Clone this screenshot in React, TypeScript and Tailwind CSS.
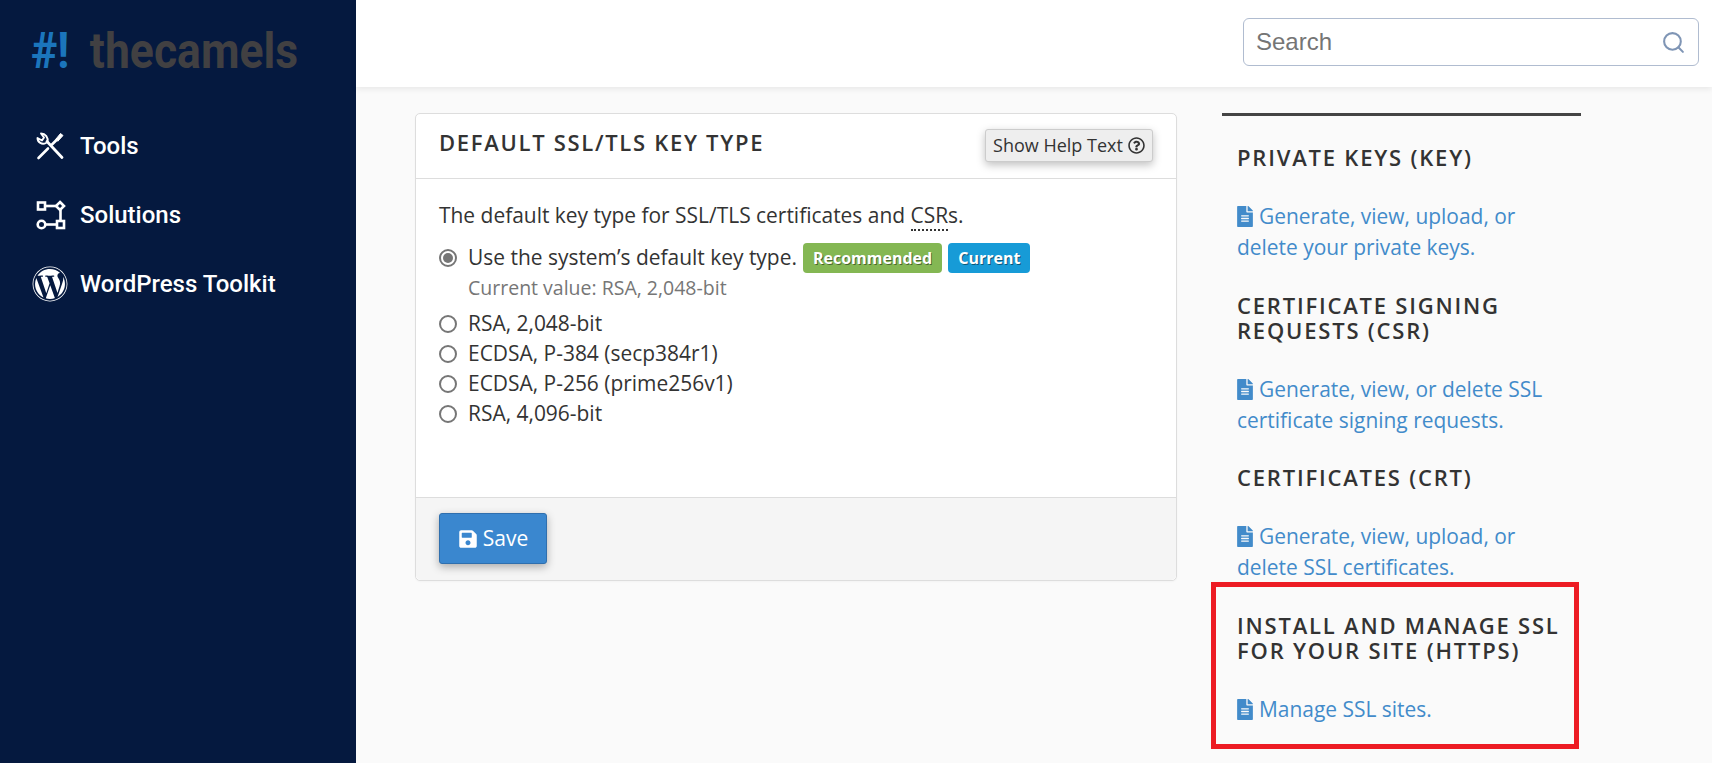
import React from "react";
import { FaWordpress, FaFileAlt, FaSave, FaRegQuestionCircle } from "react-icons/fa";
import { Search } from "lucide-react";

function ToolsIcon() {
  return (
    <svg width="28" height="28" viewBox="0 0 28 28" fill="none" stroke="white" strokeWidth="2.6" strokeLinecap="round" className="ml-[4px]">
      <path d="M2.5 26 L12 16.5" />
      <path d="M16 12.5 L21 7.5" strokeWidth="2.6" />
      <path d="M20 7 L24.5 1.5 L27 3.5 L22 9 Z" fill="white" strokeWidth="1" />
      <path d="M26 25.5 L11 9.5" strokeWidth="2.8" />
      <path d="M11.5 10 C12.5 5.5 9.5 1.5 5 1.5 L8 5.5 L6 8.5 L1.5 6 C1.5 10.5 6 13 10 11" strokeWidth="1.9" strokeLinejoin="round" />
    </svg>
  );
}

function SolutionsIcon() {
  return (
    <svg width="30" height="30" viewBox="0 0 30 30" fill="none" stroke="white" strokeWidth="2.6" className="ml-[4px]">
      <rect x="2" y="2.5" width="7" height="7" />
      <path d="M9 6 H20" />
      <path d="M24 2 L28 6 L24 10 L20 6 Z" />
      <path d="M24.5 10 V21" />
      <circle cx="5.5" cy="24.5" r="3.8" />
      <path d="M9.5 24.5 H21" />
      <rect x="21" y="21" width="7" height="7" />
    </svg>
  );
}

function NavItem({ icon, label }: { icon: React.ReactNode; label: string }) {
  return (
    <div className="flex items-center h-[69px] pl-[32px]">
      <div className="w-[48px] flex items-center justify-start shrink-0">{icon}</div>
      <span className="text-[24px] font-medium text-white" style={{ fontFamily: "Roboto, sans-serif" }}>{label}</span>
    </div>
  );
}

function Radio({ label }: { label: string }) {
  return (
    <div className="flex items-center h-[30px]">
      <span className="w-[18px] h-[18px] rounded-full border-2 border-[#767676] bg-white shrink-0 mr-[11px]" />
      <span>{label}</span>
    </div>
  );
}

function Section({ title, children, h }: { title: React.ReactNode; children: React.ReactNode; h: string }) {
  return (
    <div className={h}>
      <h2 className="text-[22px] leading-[25px] font-semibold tracking-[1.8px] text-[#333333] whitespace-nowrap">{title}</h2>
      <div className="mt-[31px] text-[20.95px] leading-[31px] text-[#428bca] whitespace-nowrap">{children}</div>
    </div>
  );
}

function FileIcon() {
  return <FaFileAlt className="inline-block w-[16px] h-[21px] mr-[6px] align-[-3px] text-[#428bca]" />;
}

export default function App() {
  return (
    <div className="flex h-[763px] w-[1712px] overflow-hidden bg-[#fafafa] text-[#333333]" style={{ fontFamily: '"Open Sans", sans-serif' }}>
      <aside className="w-[356px] shrink-0 bg-[#05193f]">
        <div className="h-[111px] pl-[31px] pt-[21px] flex items-start">
          <span className="inline-block origin-left scale-x-[0.89] text-[50px] leading-[60px] font-bold whitespace-nowrap" style={{ fontFamily: 'Roboto, sans-serif' }}>
            <span className="text-[#1b75bc]">#!</span>
            <span className="text-[#414042] ml-[23px]">thecamels</span>
          </span>
        </div>
        <NavItem icon={<ToolsIcon />} label="Tools" />
        <NavItem icon={<SolutionsIcon />} label="Solutions" />
        <NavItem icon={<FaWordpress className="w-[36px] h-[36px] text-white" />} label="WordPress Toolkit" />
      </aside>
      <main className="flex-1 flex flex-col min-w-0">
        <header className="h-[87px] shrink-0 bg-white shadow-[0_2px_6px_rgba(0,0,0,0.08)] flex items-start justify-end pt-[18px] pr-[13px] z-10">
          <div className="w-[456px] h-[48px] border border-[#b0bcd0] rounded-[6px] bg-white flex items-center justify-between pl-[12px] pr-[12px]">
            <span className="text-[24px] text-[#757575]" style={{ fontFamily: '"Liberation Sans", sans-serif' }}>Search</span>
            <Search className="w-[25px] h-[25px] text-[#7f95b5]" strokeWidth={2} />
          </div>
        </header>
        <div className="flex pt-[26px] pl-[59px] relative">
          <section className="w-[762px] h-[468px] shrink-0 bg-white border border-[#dddddd] rounded-[5px] flex flex-col text-[20.95px] shadow-[0_1px_2px_rgba(0,0,0,0.03)]">
            <div className="h-[65px] shrink-0 border-b border-[#dddddd] flex justify-between items-start pl-[23px] pr-[23px]">
              <h1 className="mt-[14px] text-[22px] leading-[28px] font-semibold tracking-[1.7px] text-[#333333]">DEFAULT SSL/TLS KEY TYPE</h1>
              <button className="mt-[15px] w-[168px] h-[33px] bg-[#eeeeee] border border-[#cccccc] rounded-[3px] text-[18px] text-[#333333] flex items-center justify-center gap-[5px] shadow-[0_3px_8px_rgba(0,0,0,0.25)]">
                Show Help Text <FaRegQuestionCircle className="w-[17px] h-[17px]" />
              </button>
            </div>
            <div className="flex-1 pl-[23px] pt-[24px]">
              <p className="leading-[24px] mb-[16px]">The default key type for SSL/TLS certificates and <span className="border-b-2 border-dotted border-[#333333]">CSR</span>s.</p>
              <div className="flex items-center h-[30px]">
                <span className="w-[18px] h-[18px] rounded-full border-2 border-[#767676] bg-white flex items-center justify-center shrink-0 mr-[11px]">
                  <span className="w-[10px] h-[10px] rounded-full bg-[#767676]" />
                </span>
                <span>Use the system’s default key type.</span>
                <span className="ml-[6px] h-[30px] px-[10px] bg-[#84b753] rounded-[4px] text-white text-[16px] font-bold flex items-center [text-shadow:1px_1px_0_rgba(0,0,0,0.45)]">Recommended</span>
                <span className="ml-[6px] h-[30px] px-[10px] bg-[#179bd7] rounded-[4px] text-white text-[16px] font-bold flex items-center [text-shadow:1px_1px_0_rgba(0,0,0,0.45)]">Current</span>
              </div>
              <div className="pl-[29px] h-[30px] leading-[30px] text-[#767676] text-[19.5px] mb-[6px]">Current value: RSA, 2,048-bit</div>
              <Radio label="RSA, 2,048-bit" />
              <Radio label="ECDSA, P-384 (secp384r1)" />
              <Radio label="ECDSA, P-256 (prime256v1)" />
              <Radio label="RSA, 4,096-bit" />
            </div>
            <div className="h-[83px] shrink-0 bg-[#f5f5f5] border-t border-[#dddddd] rounded-b-[5px] pl-[23px] pt-[15px]">
              <button className="w-[108px] h-[51px] bg-[#3a87cf] border border-[#2f6fae] rounded-[3px] text-white text-[21px] flex items-center justify-center gap-[5px] shadow-[0_3px_8px_rgba(0,0,0,0.3)]">
                <FaSave className="w-[20px] h-[20px]" /> Save
              </button>
            </div>
          </section>
          <aside className="ml-[45px] w-[359px] shrink-0 border-t-[3px] border-[#444444] pl-[15px] pt-[29px] relative">
            <Section h="h-[148px]" title="PRIVATE KEYS (KEY)">
              <FileIcon />Generate, view, upload, or<br />delete your private keys.
            </Section>
            <Section h="h-[172px]" title={<>CERTIFICATE SIGNING<br />REQUESTS (CSR)</>}>
              <FileIcon />Generate, view, or delete SSL<br />certificate signing requests.
            </Section>
            <Section h="h-[148px]" title="CERTIFICATES (CRT)">
              <FileIcon />Generate, view, upload, or<br />delete SSL certificates.
            </Section>
            <Section h="h-[150px]" title={<>INSTALL AND MANAGE SSL<br />FOR YOUR SITE (HTTPS)</>}>
              <FileIcon />Manage SSL sites.
            </Section>
            <div className="absolute left-[-11px] top-[466px] w-[368px] h-[167px] border-[5px] border-[#ed1c24] pointer-events-none" />
          </aside>
        </div>
      </main>
    </div>
  );
}
